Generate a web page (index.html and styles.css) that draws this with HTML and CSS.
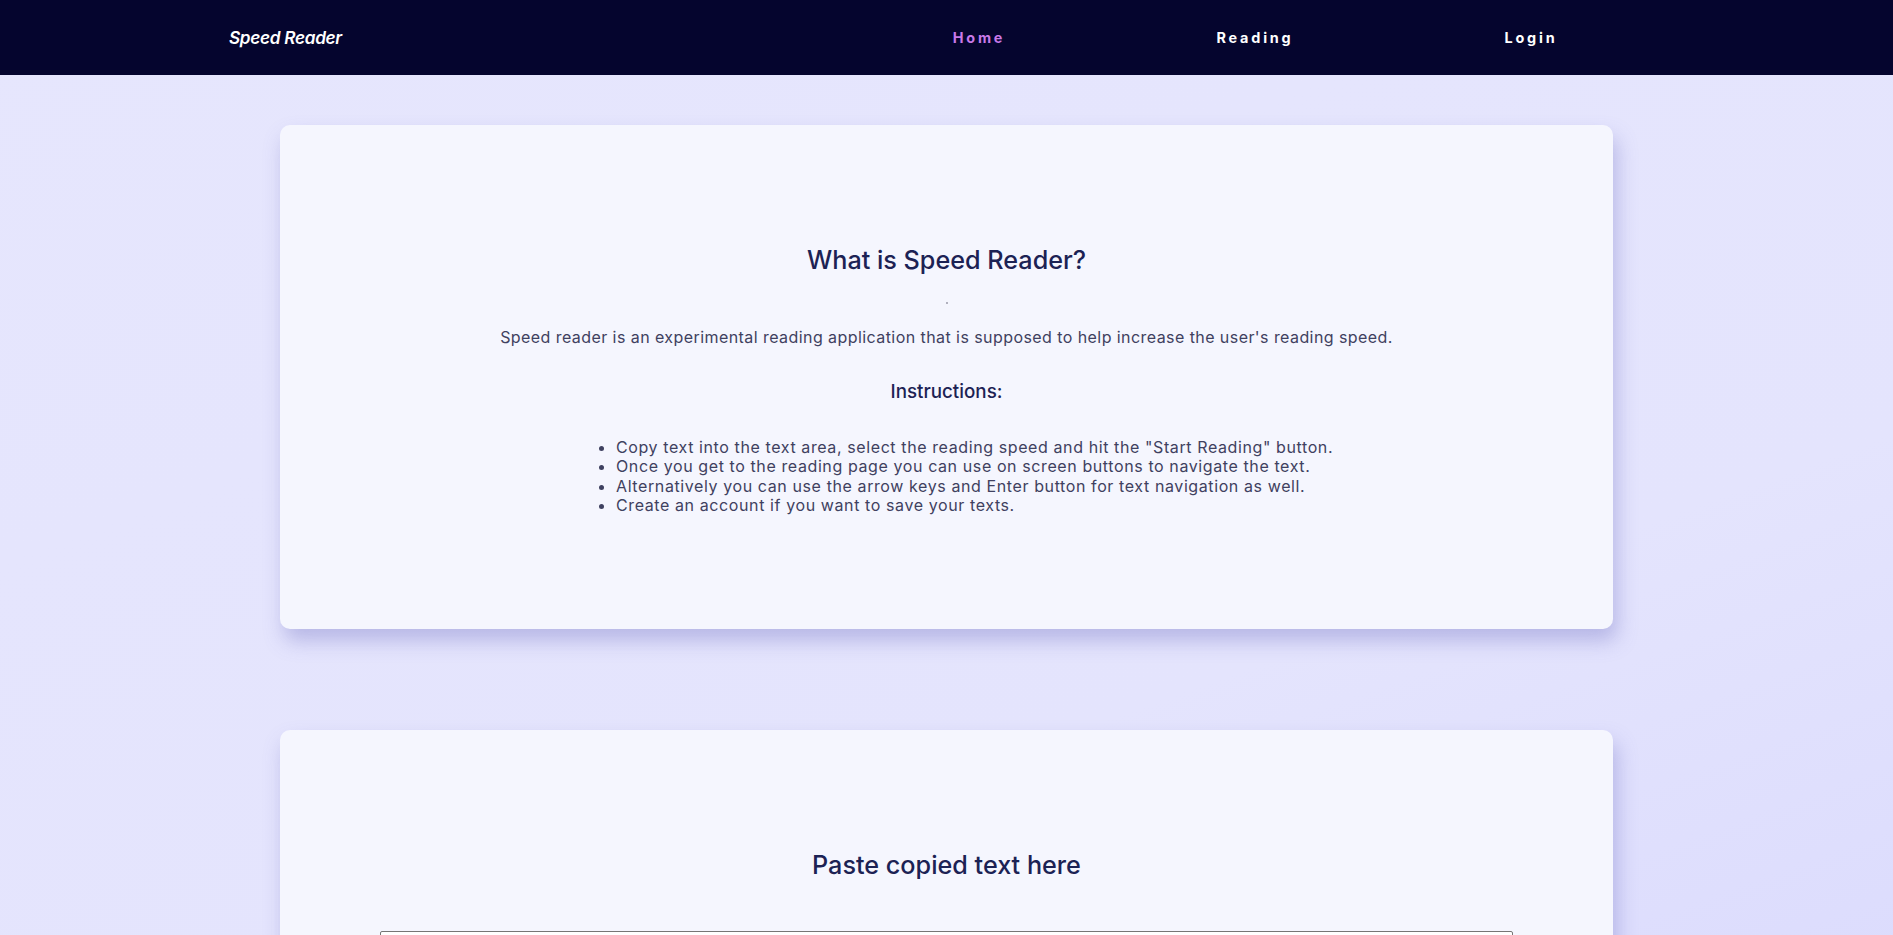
FILE: index.html
```html
<!DOCTYPE html>
<html lang="en">
<head>
<meta charset="utf-8">
<title>Speed Reader</title>
<link rel="stylesheet" href="styles.css">
</head>
<body>
<nav class="navbar">
  <div class="logo">Speed Reader</div>
  <ul class="nav-links">
    <li><a class="nav-link active" href="#">Home</a></li>
    <li><a class="nav-link" href="#">Reading</a></li>
    <li><a class="nav-link" href="#">Login</a></li>
  </ul>
</nav>
<main class="content">
  <section class="card card-info">
    <h2 class="card-title">What is Speed Reader?</h2>
    <div class="dot"></div>
    <p class="lead">Speed reader is an experimental reading application that is supposed to help increase the user's reading speed.</p>
    <h3 class="sub-title">Instructions:</h3>
    <ul class="steps">
      <li>Copy text into the text area, select the reading speed and hit the "Start Reading" button.</li>
      <li>Once you get to the reading page you can use on screen buttons to navigate the text.</li>
      <li>Alternatively you can use the arrow keys and Enter button for text navigation as well.</li>
      <li>Create an account if you want to save your texts.</li>
    </ul>
  </section>
  <section class="card card-input">
    <h2 class="card-title">Paste copied text here</h2>
    <textarea class="text-input"></textarea>
  </section>
</main>
</body>
</html>
```
FILE: styles.css
```css
* { box-sizing: border-box; }
html, body { margin: 0; padding: 0; }
body {
  font-family: Inter, "Noto Sans", sans-serif;
  background: linear-gradient(160deg, #e6e6fd 0%, #e4e4fd 55%, #d6d6fd 100%);
  min-height: 100vh;
  color: #3b3d5c;
}
.navbar {
  height: 75px;
  background: #05052e;
  display: flex;
  align-items: center;
  justify-content: space-between;
  padding: 0 224px 0 229px;
}
.logo {
  color: #ffffff;
  font-style: italic;
  font-weight: 600;
  font-size: 17.2px;
  letter-spacing: -0.3px;
}
.nav-links {
  list-style: none;
  margin: 0;
  padding: 0;
  width: 828px;
  display: flex;
}
.nav-links li {
  flex: 1;
  text-align: center;
}
.nav-link {
  color: #ffffff;
  text-decoration: none;
  font-weight: 700;
  font-size: 14.4px;
  letter-spacing: 2.8px;
  line-height: 20px;
}
.nav-link.active { color: #c879e8; }
.content {
  padding: 50px 0 40px;
  display: flex;
  flex-direction: column;
  align-items: center;
  gap: 101px;
}
.card {
  width: 1333px;
  background: #f5f6fe;
  border-radius: 10px;
  box-shadow: 4px 12px 20px rgba(100, 100, 190, 0.35);
  display: flex;
  flex-direction: column;
  align-items: center;
}
.card-info {
  height: 504px;
  padding-top: 118px;
}
.card-input {
  padding-top: 118px;
  padding-bottom: 60px;
}
.card-title {
  margin: 0;
  font-size: 25.2px;
  font-weight: 500;
  color: #1c2254;
  line-height: 34px;
}
.dot {
  width: 2px;
  height: 2px;
  background: #9a9aa8;
  border-radius: 50%;
  margin: 25px 0 0;
}
.lead {
  margin: 23px 0 0;
  font-size: 16px;
  line-height: 20px;
  letter-spacing: 0.43px;
  font-weight: 400;
  color: #3f4160;
}
.sub-title {
  margin: 33px 0 0;
  font-size: 18.8px;
  font-weight: 500;
  color: #1c2254;
  line-height: 24px;
}
.steps {
  align-self: flex-start;
  margin: 34px 0 0 316px;
  padding-left: 20px;
  font-size: 16px;
  line-height: 19.4px;
  letter-spacing: 0.6px;
  color: #3f4160;
}
.text-input {
  margin-top: 49px;
  width: 85%;
  height: 320px;
  border: 1px solid #767676;
  border-radius: 2px;
  background: #ffffff;
}
```
